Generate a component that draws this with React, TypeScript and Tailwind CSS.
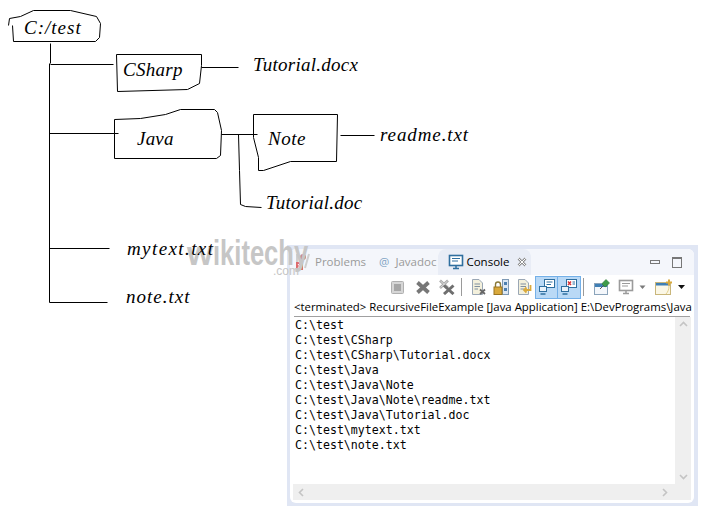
const labels = [
  { text: "C:/test", cls: "left-[24px] top-[17px] tracking-[1px]" },
  { text: "CSharp", cls: "left-[123px] top-[59px] tracking-[0.3px]" },
  { text: "Tutorial.docx", cls: "left-[253px] top-[54px] tracking-[0.25px]" },
  { text: "Java", cls: "left-[137px] top-[128px] tracking-[0.2px]" },
  { text: "Note", cls: "left-[268px] top-[128px] tracking-[0.5px]" },
  { text: "readme.txt", cls: "left-[380px] top-[124px] tracking-[0.9px]" },
  { text: "Tutorial.doc", cls: "left-[266px] top-[192px] tracking-[0.25px]" },
  { text: "mytext.txt", cls: "left-[127px] top-[238px] tracking-[1.4px]" },
  { text: "note.txt", cls: "left-[126px] top-[286px] tracking-[1px]" },
];

const lines = [
  "C:\\test",
  "C:\\test\\CSharp",
  "C:\\test\\CSharp\\Tutorial.docx",
  "C:\\test\\Java",
  "C:\\test\\Java\\Note",
  "C:\\test\\Java\\Note\\readme.txt",
  "C:\\test\\Java\\Tutorial.doc",
  "C:\\test\\mytext.txt",
  "C:\\test\\note.txt",
];

// hand drawn boxes and connectors
function Sketch() {
  const paths = [
    "M8 25L9 18L20 16L33 10L70 10L96 16L100 23L99 37L95 41L13 41L12 25",
    "M50 43V63M49 63V302M50 64H113M49 133H118M49 248H109M49 302H107",
    "M116 54H201V65L199 83L187 89L117 91Z",
    "M201 67H238",
    "M114 119L140 118L165 114L180 109H214L217 112L221 130L220 155L216 158H114Z",
    "M221 134H257",
    "M253 114H337L336 161H290L263 170H258L258 157L253 137Z",
    "M340 135H374",
    "M238 134L239 170L240 204L245 206L261 207",
  ];
  return (
    <svg className="absolute left-0 top-0" width="702" height="507" fill="none" stroke="#000" strokeWidth="1">
      <g transform="translate(.5 .5)">
        {paths.map((d) => (
          <path key={d} d={d} />
        ))}
      </g>
    </svg>
  );
}

function ToolIcon({ children, w = 16 }: { children: React.ReactNode; w?: number }) {
  return (
    <svg width={w} height="16" viewBox={`0 0 ${w} 16`} className="shrink-0">
      {children}
    </svg>
  );
}

function Monitor({ color = "#2f6f9f" }: { color?: string }) {
  return (
    <>
      <rect x="1.5" y="1.5" width="13" height="10" fill="#fff" stroke={color} strokeWidth="1.6" />
      <path d="M4 4.5H12M4 7H10" stroke={color} />
      <path d="M5 14.5H11M8 12V14" stroke={color} strokeWidth="1.5" />
    </>
  );
}

function Doc() {
  return (
    <>
      <path d="M2.5 .5H9L12.5 4V15.5H2.5Z" fill="#f3f0dc" stroke="#9aa7b5" />
      <path d="M4.5 5H10M4.5 7.5H10M4.5 10H8" stroke="#7f8fa0" />
    </>
  );
}

function Toolbar() {
  return (
    <div className="flex h-[24px] shrink-0 items-center justify-end pr-[9px]">
      <div className="mr-[11px]">
        <ToolIcon w={13}>
          <rect x=".5" y="2.5" width="12" height="12" rx="1" fill="#d6d6d6" stroke="#b0b0b0" />
          <rect x="3" y="5" width="7" height="7" fill="#a6a6a6" />
        </ToolIcon>
      </div>
      <div className="mr-[8px]">
        <ToolIcon>
          <path d="M2.5 3.5L13.5 13.5M13.5 3.5L2.5 13.5" stroke="#777" strokeWidth="3.8" />
        </ToolIcon>
      </div>
      <div className="mr-[6px]">
        <ToolIcon>
          <path d="M1 1.5L9 9M9 1.5L1 9" stroke="#a9a9a9" strokeWidth="2.6" />
          <path d="M1.5 2L8.5 8.5M8.5 2L1.5 8.5" stroke="#e8e8e8" strokeWidth=".8" />
          <path d="M5 6.5L14.5 15M14.5 6.5L5 15" stroke="#6f6f6f" strokeWidth="3" />
        </ToolIcon>
      </div>
      <div className="mr-[8px] h-[18px] w-px bg-[#9a9a9a]" />
      <div className="mr-[7px]">
        <ToolIcon>
          <Doc />
          <path d="M10 10.5L15 15M15 10.5L10 15" stroke="#666" strokeWidth="1.8" />
        </ToolIcon>
      </div>
      <div className="mr-[7px]">
        <ToolIcon>
          <rect x="9.5" y=".5" width="6" height="15" fill="#dce7f3" stroke="#7f9ab5" />
          <rect x="11" y="3" width="3" height="3" fill="#4d7fb0" />
          <rect x="11" y="9" width="3" height="3" fill="#4d7fb0" />
          <path d="M2.5 8V5.5A2.5 2.5 0 0 1 7.5 5.5V8" fill="none" stroke="#8a7a3a" strokeWidth="1.4" />
          <rect x="1" y="8" width="8" height="7.5" fill="#d9a93c" stroke="#9a7420" />
        </ToolIcon>
      </div>
      <div className="mr-[3px]">
        <ToolIcon>
          <Doc />
          <path d="M14.5 6V11H8.5M10.5 8.5L8 11L10.5 13.5" fill="none" stroke="#d9a93c" strokeWidth="1.8" />
        </ToolIcon>
      </div>
      <div className="flex h-[23px] w-[23px] items-center justify-center border border-[#74b0e8] bg-[#b9d9f6]">
        <ToolIcon>
          <rect x="5.5" y=".5" width="10" height="8" fill="#fff" stroke="#2f6f9f" />
          <path d="M7.5 3H13.5M7.5 5.5H12" stroke="#2f6f9f" />
          <rect x=".5" y="7.5" width="7" height="5" fill="#eaf2fa" stroke="#2f6f9f" />
          <path d="M1.5 15H6.5" stroke="#2f6f9f" strokeWidth="1.4" />
        </ToolIcon>
      </div>
      <div className="mr-[2px] flex h-[23px] w-[23px] items-center justify-center border border-l-0 border-[#74b0e8] bg-[#b9d9f6]">
        <ToolIcon>
          <rect x="5.5" y=".5" width="10" height="8" fill="#fff" stroke="#2f6f9f" />
          <path d="M7 2.5L10 6M10 2.5L7 6" stroke="#d8343a" strokeWidth="1.4" />
          <path d="M11.5 3H14M11.5 5H14" stroke="#2f6f9f" />
          <rect x=".5" y="7.5" width="7" height="5" fill="#eaf2fa" stroke="#2f6f9f" />
          <path d="M1.5 15H6.5" stroke="#2f6f9f" strokeWidth="1.4" />
        </ToolIcon>
      </div>
      <div className="mr-[10px] h-[18px] w-px bg-[#9a9a9a]" />
      <div className="mr-[8px]">
        <ToolIcon>
          <rect x=".5" y="4.5" width="13" height="11" fill="#f4f7fb" stroke="#8aa3ba" />
          <rect x="1" y="5" width="12" height="3" fill="#3f7fb5" />
          <path d="M6 10L10 6" stroke="#555" />
          <path d="M9 3.5L12 .5L15.5 4L12.5 7L11 8L8 5Z" fill="#3f9b4a" stroke="#2c7a38" strokeWidth=".6" />
        </ToolIcon>
      </div>
      <div className="mr-[5px]">
        <ToolIcon>
          <Monitor color="#9b9b9b" />
        </ToolIcon>
      </div>
      <div className="mr-[9px]">
        <ToolIcon w={7}>
          <path d="M.5 6.5H6.5L3.5 10Z" fill="#7a7a7a" />
        </ToolIcon>
      </div>
      <div className="mr-[5px]">
        <ToolIcon w={18}>
          <rect x=".5" y="3.5" width="15" height="12" fill="#fbf7e6" stroke="#c9b67a" />
          <rect x="1" y="4" width="14" height="2.5" fill="#3f7fb5" />
          <path d="M11 15C13 13 14 10 14 7" stroke="#e3cf8a" fill="none" />
          <path d="M14 .5V6.5M11 3.5H17" stroke="#d9a93c" strokeWidth="2" />
        </ToolIcon>
      </div>
      <ToolIcon w={7}>
        <path d="M0 6H7L3.5 10Z" fill="#111" />
      </ToolIcon>
    </div>
  );
}

function ConsoleView() {
  return (
    <div className="absolute left-[287px] top-[245px] h-[261px] w-[411px] bg-[#e0e6f4] p-[4px] pb-[3px] pl-[3px]">
      <div className="flex h-full flex-col overflow-hidden rounded-[6px] bg-white">
        {/* tab strip */}
        <div className="flex h-[26px] shrink-0 items-center bg-[#f4f6fb] pl-[5px] font-['Open_Sans',sans-serif] text-[11.5px]">
          <svg width="16" height="18" viewBox="0 0 16 18" className="shrink-0">
            <path d="M2 1V15M14 1L10 15" stroke="#cfcfcf" strokeWidth="2" />
            <circle cx="8" cy="4" r="3" fill="#c98a8a" />
            <rect x="1" y="9" width="7" height="8" fill="#dd6b6b" />
            <path d="M3 11L6 15M6 11L3 15" stroke="#fff" />
          </svg>
          <span className="ml-[4px] text-[#9a9a9a]">Problems</span>
          <span className="ml-[13px] text-[#7fa3c4]">@</span>
          <span className="ml-[6px] text-[#9a9a9a]">Javadoc</span>
          <div className="ml-[2px] flex h-[26px] w-[93px] items-center self-end rounded-t-[8px] bg-[#e9edf6] pl-[10px] text-black">
            <ToolIcon>
              <Monitor />
            </ToolIcon>
            <span className="ml-[2px]">Console</span>
            <svg width="10" height="10" viewBox="0 0 10 10" className="ml-[8px]">
              <path d="M1.5 1.5L8.5 8.5M8.5 1.5L1.5 8.5" stroke="#8f8f8f" strokeWidth="2.6" />
              <path d="M1.5 1.5L8.5 8.5M8.5 1.5L1.5 8.5" stroke="#fff" strokeWidth="1" />
            </svg>
          </div>
          <div className="ml-auto mr-[12px] flex h-[26px] items-center gap-[12px]">
            <div className="h-[4px] w-[10px] border border-[#777]" />
            <div className="h-[11px] w-[10px] border border-[#777] border-t-2" />
          </div>
        </div>
        <Toolbar />
        {/* process label */}
        <div className="mx-[4px] h-[18px] shrink-0 whitespace-nowrap border-b border-[#a0a0a0] font-['Open_Sans',sans-serif] text-[11.4px] leading-[16px] text-black">
          {"<terminated> RecursiveFileExample [Java Application] E:\\DevPrograms\\Java"}
        </div>
        {/* output */}
        <div className="mx-[3px] flex min-h-0 flex-1 flex-col">
          <div className="flex min-h-0 flex-1">
            <div className="flex-1 pl-[2px] pt-[1px] font-['DejaVu_Sans_Mono',monospace] text-[11.6px] leading-[15px] text-black">
              {lines.map((l) => (
                <div key={l}>{l}</div>
              ))}
            </div>
            <div className="flex w-[16px] flex-col items-center justify-between bg-[#efefef] py-[4px]">
              <svg width="9" height="6" viewBox="0 0 9 6" fill="none" stroke="#c4c4c4" strokeWidth="1.6">
                <path d="M1 5L4.5 1.5L8 5" />
              </svg>
              <svg width="9" height="6" viewBox="0 0 9 6" fill="none" stroke="#c4c4c4" strokeWidth="1.6">
                <path d="M1 1L4.5 4.5L8 1" />
              </svg>
            </div>
          </div>
          <div className="mb-[3px] flex h-[16px] shrink-0 items-center justify-between bg-[#efefef] pl-[5px] pr-[23px]">
            <svg width="6" height="9" viewBox="0 0 6 9" fill="none" stroke="#c4c4c4" strokeWidth="1.6">
              <path d="M5 1L1.5 4.5L5 8" />
            </svg>
            <svg width="6" height="9" viewBox="0 0 6 9" fill="none" stroke="#c4c4c4" strokeWidth="1.6">
              <path d="M1 1L4.5 4.5L1 8" />
            </svg>
          </div>
        </div>
      </div>
    </div>
  );
}

function Watermark() {
  return (
    <div className="pointer-events-none absolute left-[187px] top-[233px] w-[125px] font-['Liberation_Sans',sans-serif] text-[#c6c6c6]">
      <div className="flex items-baseline text-[35px] font-bold leading-[40px]">
        <span className="text-[33px]">w</span>
        <span className="origin-left scale-x-[0.73]">ikitechy</span>
      </div>
      <div className="absolute left-[86px] top-[31px] text-[12px] font-normal leading-[14px]">.com</div>
    </div>
  );
}

export default function App() {
  return (
    <div className="relative h-[507px] w-[702px] overflow-hidden bg-white">
      <Sketch />
      <ConsoleView />
      <Watermark />
      {labels.map((l) => (
        <span
          key={l.text}
          className={`absolute whitespace-nowrap font-['Liberation_Serif',serif] text-[19px] italic leading-[22px] text-black ${l.cls}`}
        >
          {l.text}
        </span>
      ))}
    </div>
  );
}
